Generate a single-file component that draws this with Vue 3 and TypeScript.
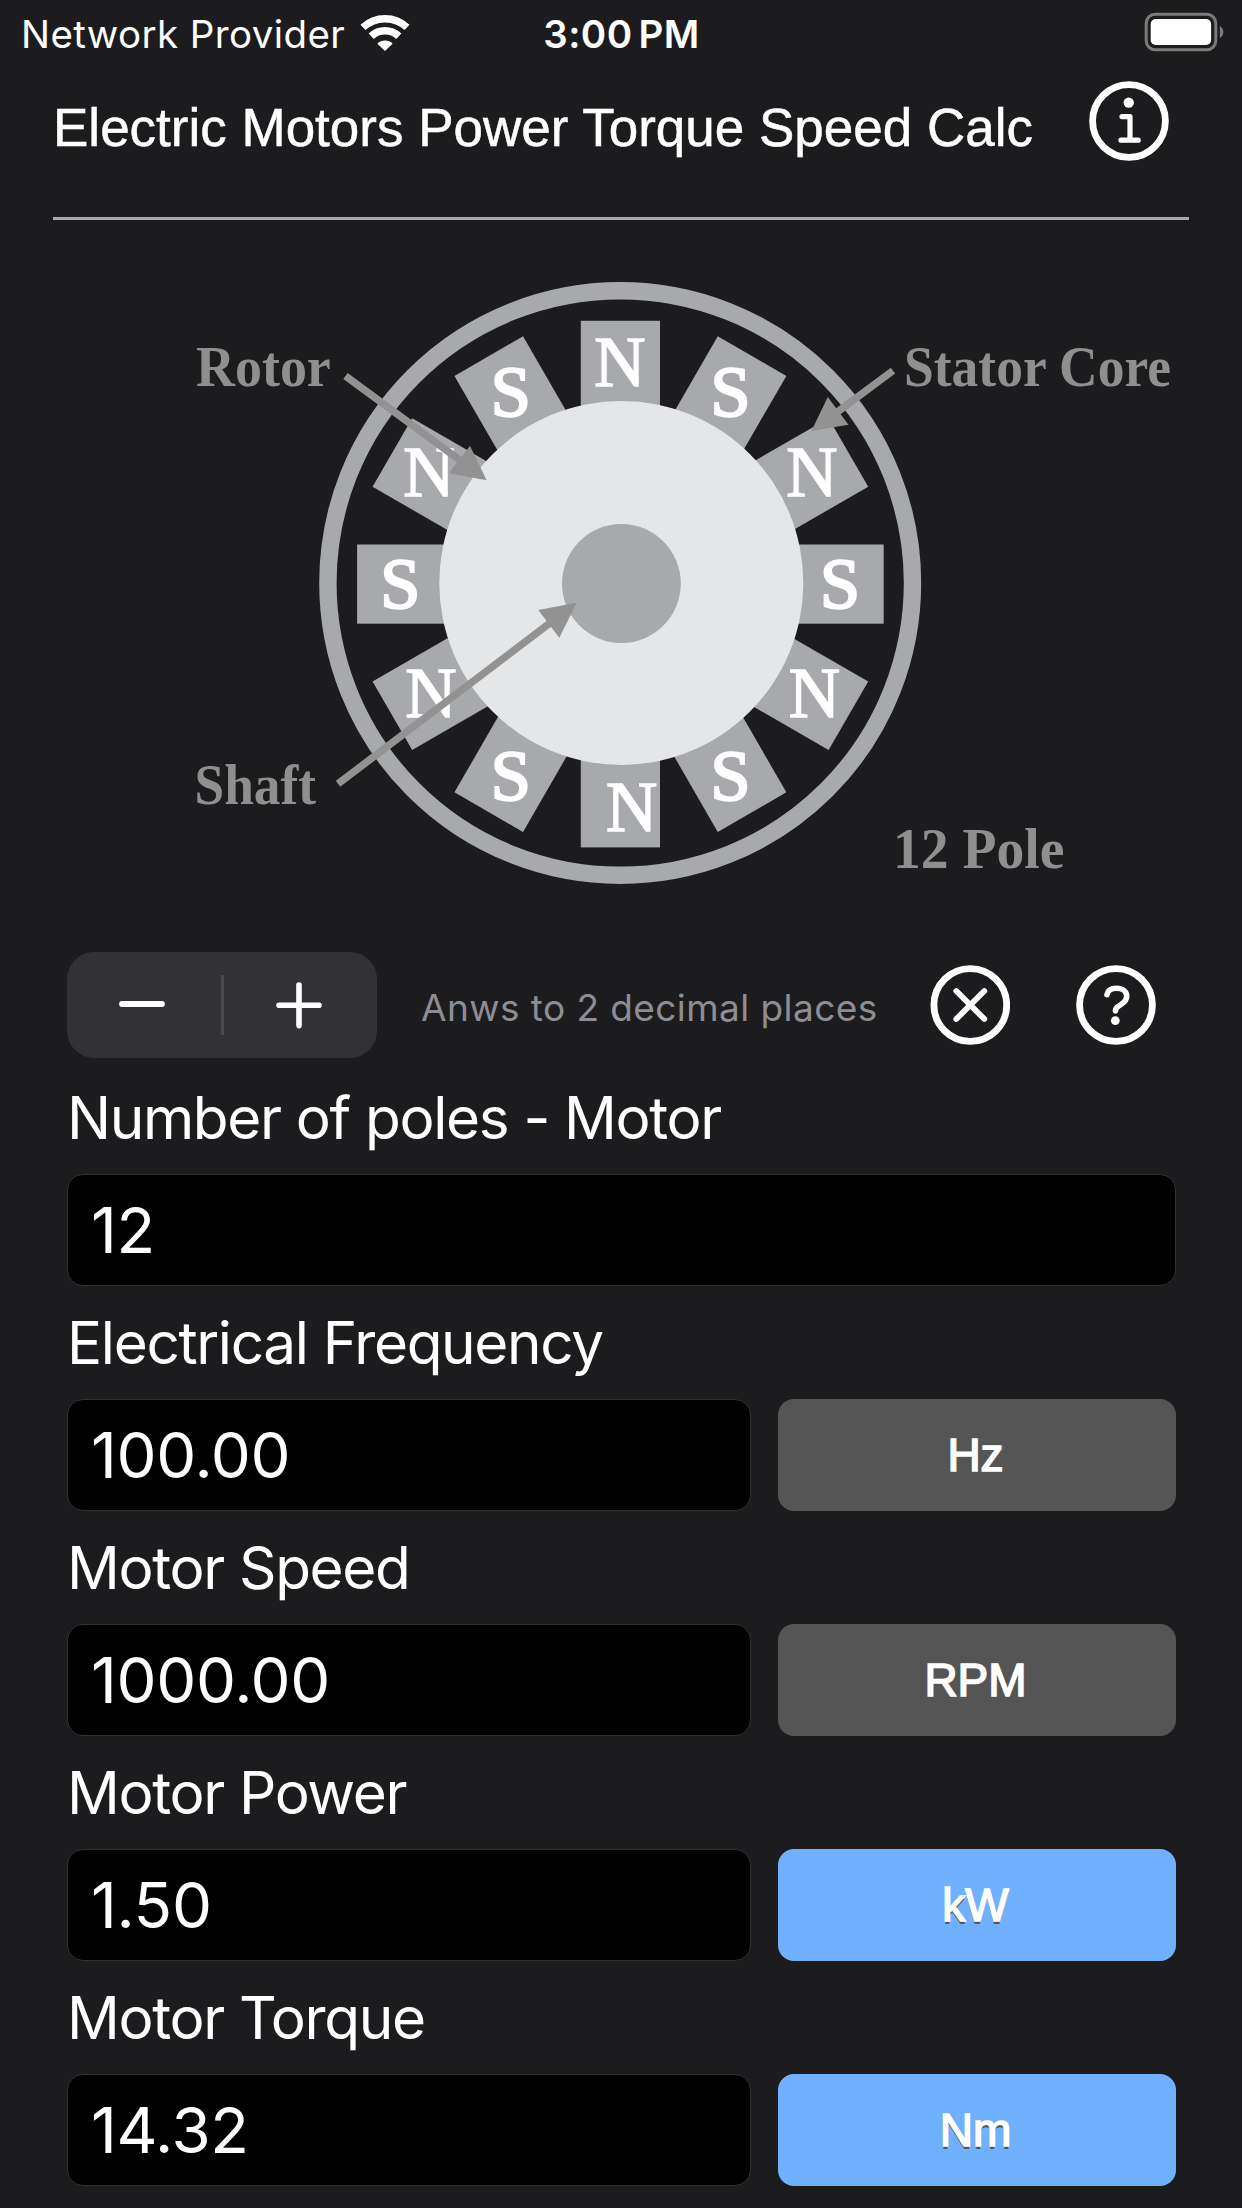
<script setup lang="ts">
interface Pole { letter: 'N' | 'S'; angle: number; x: number; y: number }
interface Arrow { from: [number, number]; to: [number, number]; head: string }
interface DiagramLabel { text: string; x: number; y: number; width: number }
interface Field { label: string; value: string; unit?: string; selectable?: boolean; key: string }

const poles: Pole[] = [
  { letter: 'N', angle: 0, x: 620, y: 385.5 },
  { letter: 'S', angle: 30, x: 730.4, y: 416 },
  { letter: 'N', angle: 60, x: 812, y: 496 },
  { letter: 'S', angle: 90, x: 840, y: 608.2 },
  { letter: 'N', angle: 120, x: 814.4, y: 717 },
  { letter: 'S', angle: 150, x: 730.4, y: 799.6 },
  { letter: 'N', angle: 180, x: 631.6, y: 830.5 },
  { letter: 'S', angle: 210, x: 510.8, y: 799.6 },
  { letter: 'N', angle: 240, x: 431, y: 717 },
  { letter: 'S', angle: 270, x: 400.3, y: 608.2 },
  { letter: 'N', angle: 300, x: 429, y: 496 },
  { letter: 'S', angle: 330, x: 510.8, y: 416 },
]

const arrows: Arrow[] = [
  { from: [345.5, 376], to: [461, 461], head: '486.7,480.3 470,446 448.7,473.3' },
  { from: [893, 370.6], to: [836, 413], head: '811.4,431 827.8,397 848.5,424.7' },
  { from: [338, 783.8], to: [550, 623], head: '576.7,602.7 538.3,610 559.3,637.7' },
]

const diagramLabels: DiagramLabel[] = [
  { text: 'Rotor', x: 196, y: 386, width: 134.8 },
  { text: 'Stator Core', x: 904, y: 386, width: 267 },
  { text: 'Shaft', x: 194.5, y: 804, width: 121.5 },
  { text: '12 Pole', x: 893, y: 868, width: 171.5 },
]

const fields: Field[] = [
  { key: 'poles', label: 'Number of poles - Motor', value: '12' },
  { key: 'frequency', label: 'Electrical Frequency', value: '100.00', unit: 'Hz' },
  { key: 'speed', label: 'Motor Speed', value: '1000.00', unit: 'RPM' },
  { key: 'power', label: 'Motor Power', value: '1.50', unit: 'kW', selectable: true },
  { key: 'torque', label: 'Motor Torque', value: '14.32', unit: 'Nm', selectable: true },
]
</script>

<template>
  <main class="screen">
    <div class="status">
      <div class="carrier">
        <span class="carrier-name">Network Provider</span>
        <svg class="wifi" width="50" height="38" viewBox="0 0 50 38" fill="none" stroke="#fff" stroke-width="7.4">
          <path d="M3 13.4A32.3 32.3 0 0 1 47 13.4" />
          <path d="M11.2 22.2A20.2 20.2 0 0 1 38.8 22.2" />
          <path d="M25 37L17.4 29.7A10.6 10.6 0 0 1 32.6 29.7Z" fill="#fff" stroke="none" />
        </svg>
      </div>
      <span class="time">3:00 PM</span>
      <svg class="battery" width="80" height="40" viewBox="0 0 80 40">
        <rect x="2.2" y="2.2" width="69.6" height="35.6" rx="9" fill="none" stroke="#7b7b7c" stroke-width="3" />
        <rect x="6.7" y="7" width="60.4" height="26" rx="5" fill="#fff" />
        <path d="M75.8 14Q79.3 16 79.3 20T75.8 26Z" fill="#7b7b7c" />
      </svg>
    </div>

    <header class="header">
      <h1 class="title">Electric Motors Power Torque Speed Calc</h1>
      <button class="round info" aria-label="Info">
        <svg width="80" height="80" viewBox="0 0 80 80" class="glyph">
          <circle cx="40" cy="40" r="36.4" stroke-width="6.8" />
          <path d="M33 35.6H41V59M32 59.2H49.2" stroke-width="5.2" />
          <circle cx="39.7" cy="21.6" r="5.2" class="dot" />
        </svg>
      </button>
    </header>
    <div class="rule"></div>

    <svg class="diagram" width="1242" height="732" viewBox="0 220 1242 732">
      <circle cx="620.2" cy="583" r="292.3" fill="none" stroke="#a8a9ac" stroke-width="17.4" />
      <rect
        v-for="pole in poles"
        :key="pole.angle"
        x="580.8"
        y="320.8"
        width="79.2"
        height="150"
        fill="#a8a9ac"
        :transform="`rotate(${pole.angle} 620.4 584.1)`"
      />
      <circle cx="621.3" cy="582.9" r="182" fill="#e5e6e8" />
      <circle cx="621.4" cy="583.5" r="59.4" fill="#a8a9ac" />
      <text
        v-for="pole in poles"
        :key="pole.angle"
        :x="pole.x"
        :y="pole.y"
        class="pole-letter"
        :class="{ south: pole.letter === 'S' }"
      >{{ pole.letter }}</text>
      <g v-for="arrow in arrows" :key="arrow.head" fill="#929292">
        <line :x1="arrow.from[0]" :y1="arrow.from[1]" :x2="arrow.to[0]" :y2="arrow.to[1]" stroke="#929292" stroke-width="7.4" />
        <polygon :points="arrow.head" />
      </g>
      <text
        v-for="label in diagramLabels"
        :key="label.text"
        :x="label.x"
        :y="label.y"
        :textLength="label.width"
        lengthAdjust="spacingAndGlyphs"
        class="callout"
      >{{ label.text }}</text>
    </svg>

    <div class="tools">
      <div class="stepper">
        <svg class="step" width="155" height="106" viewBox="0 0 155 106">
          <path d="M55 52H95" />
        </svg>
        <span class="divider"></span>
        <svg class="step plus" width="152" height="106" viewBox="0 0 152 106">
          <path d="M56 53.3H96M76 33V73.6" />
        </svg>
      </div>
      <span class="hint">Anws to 2 decimal places</span>
      <button class="round" aria-label="Clear">
        <svg width="80" height="80" viewBox="0 0 80 80" class="glyph">
          <circle cx="40.3" cy="40" r="36.4" stroke-width="6.8" />
          <path d="M26.3 26L54.3 54M54.3 26L26.3 54" stroke-width="5.8" />
        </svg>
      </button>
      <button class="round help" aria-label="Help">
        <svg width="80" height="80" viewBox="0 0 80 80" class="glyph">
          <circle cx="40" cy="40" r="36.4" stroke-width="6.8" />
          <path
            d="M31 29.7C31.7 25.5 35 23.3 40.5 23.3C46.5 23.3 50.7 26.6 50.7 31.3C50.7 35.2 48.6 37.2 45 39.5C41 42 39.4 43.3 39.4 45.8"
            stroke-width="5.6"
          />
          <circle cx="39.3" cy="55.6" r="4.4" class="dot" />
        </svg>
      </button>
    </div>

    <section class="form">
      <div v-for="field in fields" :key="field.key" class="group">
        <div class="label">{{ field.label }}</div>
        <div class="row">
          <div class="value">{{ field.value }}</div>
          <button v-if="field.unit" class="unit" :class="{ selectable: field.selectable }">{{ field.unit }}</button>
        </div>
      </div>
    </section>
  </main>
</template>

<style>
body {
  margin: 0;
  background: #1c1c1e;
}
</style>

<style scoped>
.screen {
  box-sizing: border-box;
  width: 1242px;
  height: 2208px;
  overflow: hidden;
  display: flex;
  flex-direction: column;
  background: #1c1c1e;
  color: #fff;
  font-family: Inter, "Liberation Sans", sans-serif;
}
.status {
  flex: none;
  height: 68px;
  padding: 0 18px 0 21px;
  display: grid;
  grid-template-columns: 1fr auto 1fr;
  align-items: center;
  font-size: 38.5px;
  line-height: 68px;
}
.carrier {
  display: flex;
  align-items: center;
}
.carrier-name {
  width: 339px;
  letter-spacing: 0.4px;
  white-space: nowrap;
}
.wifi {
  margin-top: -2px;
}
.time {
  padding-right: 2px;
  font-weight: 600;
  letter-spacing: 0.4px;
  word-spacing: -4px;
  white-space: nowrap;
}
.battery {
  justify-self: end;
  margin-top: -4px;
}
.header {
  flex: none;
  height: 117px;
  padding: 0 73px 0 53px;
  display: flex;
  align-items: center;
  justify-content: space-between;
}
.title {
  margin: 0;
  padding-top: 2px;
  font: 400 53px/115px "Liberation Sans", Arial, sans-serif;
  white-space: nowrap;
  -webkit-text-stroke: 0.5px #fff;
}
.round {
  flex: none;
  width: 80px;
  height: 80px;
  padding: 0;
  border: 0;
  background: none;
}
.info {
  margin-bottom: 11px;
}
.glyph {
  display: block;
  fill: none;
  stroke: #fff;
  stroke-linecap: round;
  stroke-linejoin: round;
}
.dot {
  fill: #fff;
  stroke: none;
}
.rule {
  flex: none;
  height: 3px;
  margin: 32px 53px 0;
  background: #a9a9a9;
}
.diagram {
  flex: none;
  display: block;
}
.pole-letter {
  font-family: "Liberation Serif", serif;
  font-size: 71px;
  text-anchor: middle;
  fill: #fff;
  stroke: #fff;
  stroke-width: 1.6px;
}
.south {
  font-size: 72px;
  stroke-width: 2.4px;
}
.callout {
  font-family: "Liberation Serif", serif;
  font-size: 56px;
  font-weight: 700;
  fill: #8f8f8f;
}
.tools {
  flex: none;
  height: 106px;
  margin-bottom: 3px;
  padding: 0 86px 0 67px;
  display: flex;
  align-items: center;
}
.stepper {
  width: 310px;
  height: 106px;
  border-radius: 27px;
  background: #323136;
  display: flex;
  align-items: center;
}
.step {
  fill: none;
  stroke: #fff;
  stroke-width: 5.8px;
  stroke-linecap: round;
}
.plus {
  stroke-width: 5.6px;
}
.divider {
  width: 3px;
  height: 60px;
  margin: 0 -1px;
  background: #49484d;
}
.hint {
  flex: 1;
  padding: 5px 0 0 44px;
  font-size: 37px;
  letter-spacing: 0.43px;
  color: #8e8d93;
  white-space: nowrap;
}
.help {
  margin-left: 66px;
}
.form {
  padding: 0 66px 0 67px;
}
.label {
  height: 113px;
  font-size: 58.5px;
  line-height: 113px;
  letter-spacing: -1.35px;
  white-space: nowrap;
}
.row {
  display: flex;
  gap: 27px;
}
.value {
  box-sizing: border-box;
  flex: 1;
  height: 112px;
  padding-left: 23px;
  border: 1.5px solid #303032;
  border-radius: 16px;
  background: #000;
  font-size: 63.5px;
  line-height: 109px;
  letter-spacing: -0.3px;
}
.unit {
  width: 398px;
  height: 112px;
  padding: 1px 3px 0 0;
  border: 0;
  border-radius: 16px;
  background: #555;
  color: #fff;
  font: 400 46px/111px "Liberation Sans", Arial, sans-serif;
  -webkit-text-stroke: 1.6px #fff;
}
.selectable {
  background: #70b1ff;
  text-shadow: 0 3px 0 #555;
}
</style>
